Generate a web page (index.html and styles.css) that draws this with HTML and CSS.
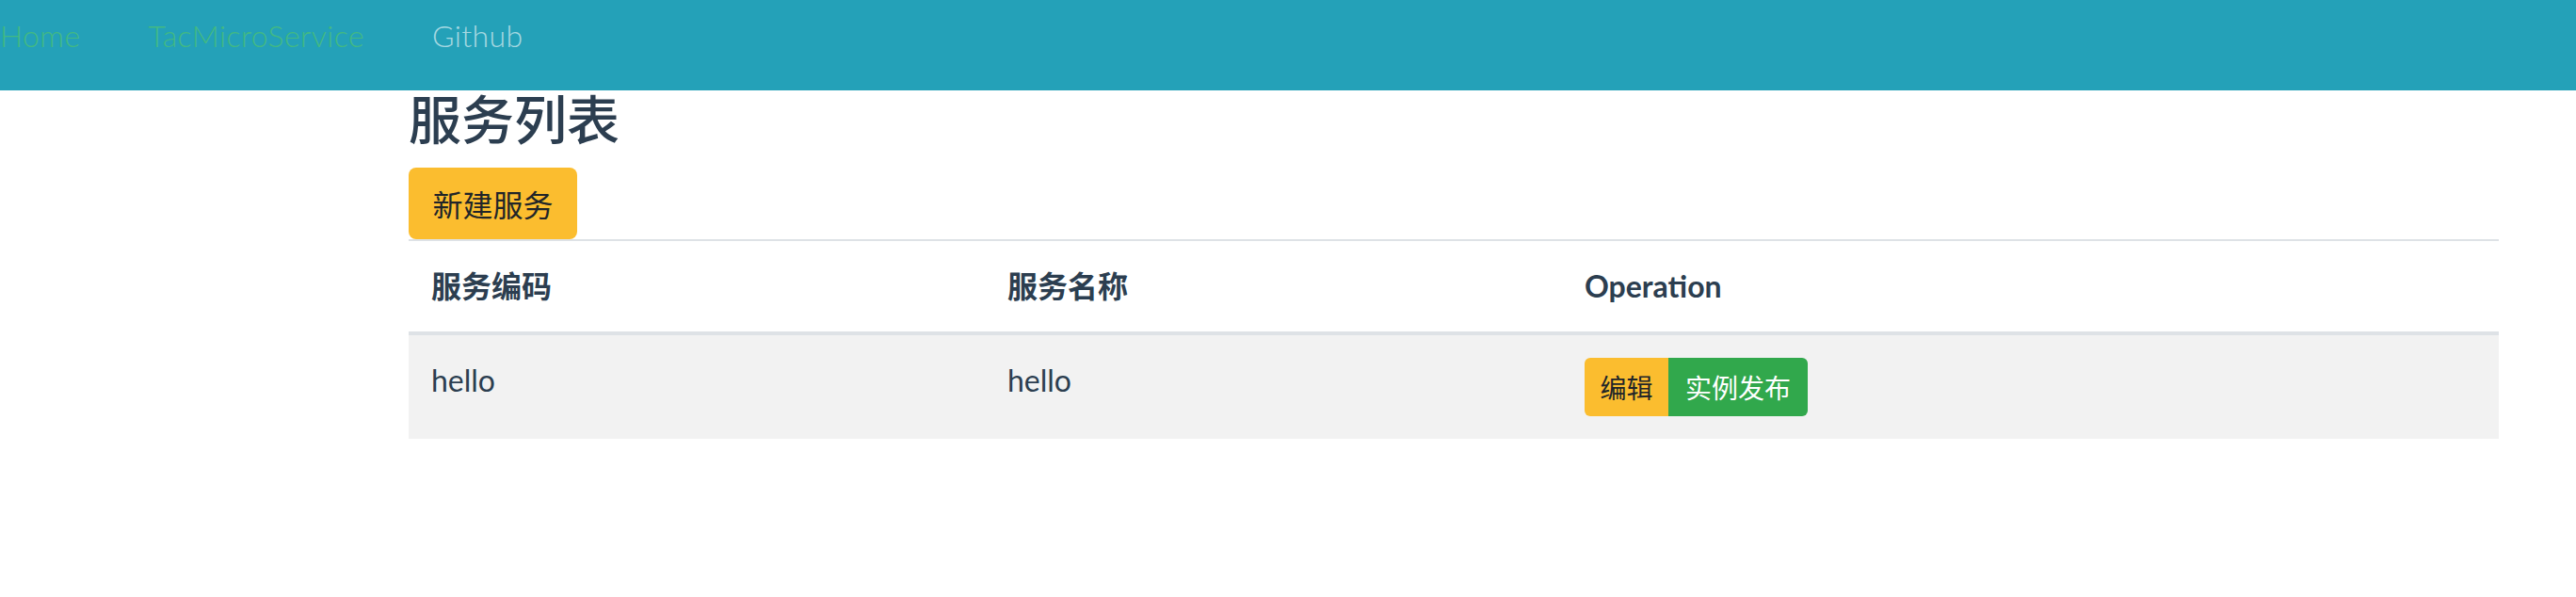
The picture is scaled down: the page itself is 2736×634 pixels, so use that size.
FILE: index.html
```html
<!DOCTYPE html>
<html lang="zh">
<head>
<meta charset="utf-8">
<title>服务列表</title>
<link rel="stylesheet" href="styles.css">
</head>
<body>
<nav class="navbar">
  <ul class="nav-list">
    <li><a class="nav-link active" href="#">Home</a></li>
    <li><a class="nav-link active" href="#">TacMicroService</a></li>
    <li><a class="nav-link" href="#">Github</a></li>
  </ul>
</nav>
<main class="content">
  <h1 class="title">服务列表</h1>
  <button class="btn btn-warning btn-new">新建服务</button>
  <table class="table">
    <thead>
      <tr>
        <th class="col-code">服务编码</th>
        <th class="col-name">服务名称</th>
        <th>Operation</th>
      </tr>
    </thead>
    <tbody>
      <tr>
        <td>hello</td>
        <td>hello</td>
        <td>
          <div class="btn-group">
            <button class="btn btn-warning btn-sm btn-edit">编辑</button>
            <button class="btn btn-success btn-sm btn-publish">实例发布</button>
          </div>
        </td>
      </tr>
    </tbody>
  </table>
</main>
</body>
</html>
```

FILE: styles.css
```css
* { box-sizing: border-box; }
body {
  margin: 0;
  font-family: "Lato", "Noto Sans CJK SC", sans-serif;
  color: #2c3e50;
  background: #ffffff;
}
.navbar {
  height: 96px;
  background: #24a1b8;
  padding-top: 18px;
}
.nav-list {
  list-style: none;
  margin: 0;
  padding: 0;
  display: flex;
  gap: 72px;
}
.nav-link {
  font-family: "Lato", sans-serif;
  font-weight: 300;
  font-size: 32px;
  letter-spacing: 0.4px;
  line-height: 40px;
  text-decoration: none;
  color: rgba(255, 255, 255, 0.6);
}
.nav-link.active { color: #42b983; }
.content {
  margin-left: 434px;
  width: 2220px;
}
.title {
  margin: 0 0 26px;
  padding-top: 0;
  font-family: "Noto Sans CJK SC", sans-serif;
  font-weight: 500;
  font-size: 56px;
  line-height: 56px;
  color: #2c3e50;
}
.btn {
  border: none;
  font-family: "Noto Sans CJK SC", sans-serif;
  font-weight: 400;
  cursor: pointer;
  padding: 0;
}
.btn-warning { background: #fbbd2f; color: #212529; }
.btn-success { background: #31a84c; color: #ffffff; }
.btn-new {
  display: block;
  width: 179px;
  height: 76px;
  border-radius: 8px;
  font-size: 32px;
  line-height: 1;
}
.table {
  width: 100%;
  border-collapse: collapse;
  table-layout: fixed;
  border-top: 2px solid #dee2e6;
}
.table th, .table td {
  text-align: left;
  padding: 24px;
  vertical-align: top;
  line-height: 48px;
}
.table th {
  font-family: "Lato", "Noto Sans CJK SC", sans-serif;
  font-weight: 700;
  font-size: 32px;
  border-bottom: 4px solid #dee2e6;
}
.col-code { width: 612px; }
.col-name { width: 613px; }
.table td {
  background: #f2f2f2;
  font-family: "Lato", sans-serif;
  font-weight: 400;
  font-size: 32px;
}
.btn-group {
  display: flex;
}
.btn-sm {
  height: 62px;
  font-size: 28px;
  line-height: 1;
}
.btn-edit {
  width: 89px;
  border-radius: 6px 0 0 6px;
}
.btn-publish {
  width: 148px;
  border-radius: 0 6px 6px 0;
}
```
